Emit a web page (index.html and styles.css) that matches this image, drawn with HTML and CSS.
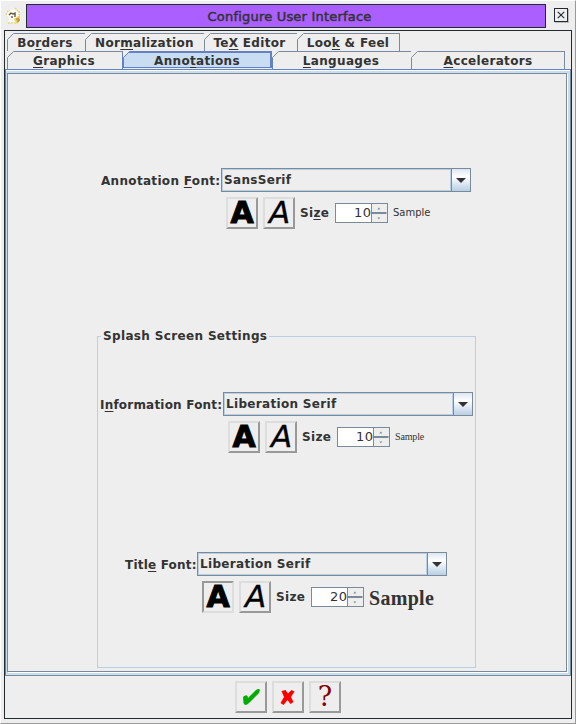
FILE: index.html
```
<!DOCTYPE html>
<html lang="en">
<head>
<meta charset="utf-8">
<title>Configure User Interface</title>
<link rel="stylesheet" href="styles.css">
</head>
<body>
<svg class="defs" width="0" height="0">
  <symbol id="cut" viewBox="0 0 7 7"><path d="M0 0H7L0 7Z" fill="#eee"/><path d="M.5 6.5L6.5 .5" stroke="currentColor" fill="none"/></symbol>
  <symbol id="down" viewBox="0 0 10 5"><path d="M0 0H10L5 5Z" fill="#333"/></symbol>
  <symbol id="arrows" viewBox="0 0 15 18"><path d="M0 9H15" stroke="#7a8a99" stroke-width="2"/><path d="M5.5 5.5H8.5L7 3.5ZM5.5 13.5H8.5L7 15.5Z" fill="#7a8a99"/></symbol>
</svg>
<div class="window">
  <header class="titlebar">
    <svg class="appicon" width="18" height="18" viewBox="0 0 18 18"><path d="M1 8Q2 2 7 3Q10 0 12 4Q15 5 15 9L16 14L11 17L3 16Q3 13 5 11Z" fill="#fffdf0"/><path d="M1 8L3 4L5 3M10 1L13 4M3 16H12M14 4V8" stroke="#ead27b" stroke-width="1.5" fill="none" stroke-dasharray="2 1"/><path d="M4 8L6 6L8 7L10 6V10M7 9V11" stroke="#594f3c" stroke-width="1.3" fill="none"/><path d="M9 12L15 8V14L12 17Z" fill="#efcd59"/><path d="M11 12H14V14H12" stroke="#9d853c" fill="none"/></svg>
    <h1 class="title">Configure User Interface</h1>
    <button class="close"><svg width="13" height="13" viewBox="0 0 13 13"><path d="M3 3L10 10M10 3L3 10" stroke="#222b2e" stroke-width="1.2"/></svg></button>
  </header>
  <main class="frame">
    <nav class="tabs upper">
      <div class="tab borders"><svg class="cut"><use href="#cut"/></svg><span>Bo<u>r</u>ders</span></div>
      <div class="tab normal"><svg class="cut"><use href="#cut"/></svg><span>Nor<u>m</u>alization</span></div>
      <div class="tab tex"><svg class="cut"><use href="#cut"/></svg><span>Te<u>X</u> Editor</span></div>
      <div class="tab look"><svg class="cut"><use href="#cut"/></svg><span>Loo<u>k</u> &amp; Feel</span></div>
    </nav>
    <nav class="tabs lower">
      <div class="tab graphics"><svg class="cut"><use href="#cut"/></svg><span><u>G</u>raphics</span></div>
      <div class="tab annot selected"><svg class="cut"><use href="#cut"/></svg><span>Anno<u>t</u>ations</span></div>
      <div class="tab lang"><svg class="cut"><use href="#cut"/></svg><span><u>L</u>anguages</span></div>
      <div class="tab accel"><svg class="cut"><use href="#cut"/></svg><span><u>A</u>ccelerators</span></div>
    </nav>
    <div class="pane"><div class="sheet">
      <section class="group annotation">
        <div class="row"><label>Annotation <u>F</u>ont:</label><div class="combo"><span>SansSerif</span><i><svg width="10" height="5"><use href="#down"/></svg></i></div></div>
        <div class="row tools"><button class="toggle"><b>A</b></button><button class="toggle"><em>A</em></button><label class="size">Si<u>z</u>e</label><div class="spinner"><span>10</span><svg class="arrows"><use href="#arrows"/></svg></div><span class="sample sans">Sample</span></div>
      </section>
      <fieldset class="splash">
        <legend>Splash Screen Settings</legend>
        <section class="group info">
          <div class="row"><label>I<u>n</u>formation Font:</label><div class="combo"><span>Liberation Serif</span><i><svg width="10" height="5"><use href="#down"/></svg></i></div></div>
          <div class="row tools"><button class="toggle"><b>A</b></button><button class="toggle"><em>A</em></button><label class="size">Size</label><div class="spinner"><span>10</span><svg class="arrows"><use href="#arrows"/></svg></div><span class="sample serif">Sample</span></div>
        </section>
        <section class="group titlefont">
          <div class="row"><label>Titl<u>e</u> Font:</label><div class="combo"><span>Liberation Serif</span><i><svg width="10" height="5"><use href="#down"/></svg></i></div></div>
          <div class="row tools"><button class="toggle pressed"><b>A</b></button><button class="toggle"><em>A</em></button><label class="size">Size</label><div class="spinner"><span>20</span><svg class="arrows"><use href="#arrows"/></svg></div><span class="sample large">Sample</span></div>
        </section>
      </fieldset>
    </div></div>
    <footer class="actions">
      <button class="toggle"><svg width="28" height="28" viewBox="0 0 28 28"><path d="M6 14Q9 11 10.500 13L11 15L19 7Q22 5 23 7L22 10L12 20Q8 24 6.500 20Z" fill="#00ad00"/></svg></button>
      <button class="toggle"><svg width="28" height="28" viewBox="0 0 28 28"><path transform="translate(-.5 0)" d="M8 8L12 7L14.500 10.500L18 7L21 8.500L17.500 14L20 19L17 21L14 17L10 22L7 20L10.500 14Z" fill="#f00"/></svg></button>
      <button class="toggle help">?</button>
    </footer>
  </main>
</div>
</body>
</html>
```
FILE: styles.css
```
* { box-sizing: border-box; }
body { margin: 0; background: #eee; color: #333; font: bold 12px/14px "DejaVu Sans", sans-serif; letter-spacing: .32px; }
button { padding: 0; font: inherit; color: inherit; background: #eee; }
u { text-decoration: underline; text-decoration-thickness: 1px; text-underline-offset: 2px; text-decoration-skip-ink: none; }
.defs { position: absolute; }
.window { width: 576px; height: 724px; padding: 3px 3px 4px 3px; border: 1px solid; border-color: #fff #999 #999 #fff; }
.titlebar { display: flex; height: 26px; align-items: flex-start; }
.appicon { margin: 3px 2px 0 1px; }
.title { flex: none; width: 520px; height: 24px; margin: 0 0 0 1px; border: 1px solid #222b2e; background: #ac5fff; font-size: 13px; font-weight: normal; line-height: 23px; text-align: center; letter-spacing: .2px; padding-left: 7px; -webkit-text-stroke: .5px #333; }
.close { flex: none; width: 14px; height: 14px; margin: 4px 0 0 8px; border: 1px solid #222b2e; box-shadow: 1px 1px #bbb; }
.close svg { display: block; width: 12px; height: 12px; }
.frame { width: 568px; height: 689px; border: 1px solid #222b2e; }
.tabs { display: flex; height: 18px; margin-left: 2px; }
.upper { margin-top: 2px; }
.tab { position: relative; color: #333; border-top: 1px solid #7a8a99; border-left: 1px solid #7a8a99; text-align: center; line-height: 18px; height: 18px; }
.tab:last-child { border-right: 1px solid #7a8a99; }
.cut { position: absolute; left: -1px; top: -1px; width: 7px; height: 7px; color: #7a8a99; }
.borders { width: 78px; padding-right: 3px; }
.normal { width: 119px; padding-right: 1px; }
.tex { width: 93px; padding-right: 3px; }
.look { width: 103px; padding-right: 1px; }
.graphics { width: 116px; padding-right: 2px; border-right: 1px solid #6382bf; }
.annot { width: 149px; padding-right: 1px; }
.lang { width: 139px; padding-right: 2px; }
.accel { width: 154px; }
.tab.selected { background: #c8ddf2; border: 1px solid #6382bf; height: 17px; box-shadow: inset -1px 1px #6382bf; }
.selected .cut { color: #6382bf; }
.selected + .tab { border-left-color: #6382bf; }
.pane { height: 607px; border: 1px solid #7a8a99; border-top-color: #6382bf; border-left-color: #6382bf; background: #c8ddf2; padding: 3px 3px 3px 1px; box-shadow: inset 0 1px #fff; }
.sheet { width: 560px; height: 599px; border: 1px solid #7a8a99; box-shadow: 1px 1px #fff; background: #eee; padding-top: 94px; }
.row { display: flex; }
.row label { flex: none; white-space: nowrap; padding-top: 6px; }
.combo { flex: none; display: flex; width: 250px; height: 24px; border: 1px solid #7a8a99; }
.combo span { width: 229px; border: 1px solid #b8cfe5; padding: 3px 0 0 1px; }
.combo i { flex: 1; display: flex; align-items: center; justify-content: center; border-left: 1px solid #7a8a99; background: linear-gradient(#dce6f2, #fff 35%, #b8cfe5); }
.tools { padding-top: 5px; }
.toggle { flex: none; width: 32px; height: 32px; margin-right: 5px; border: 2px solid; border-color: #ddd #999 #999 #ddd; color: #000; display: flex; justify-content: center; align-items: center; }
.pressed { border-color: #999 #ddd #ddd #999; }
.toggle b, .toggle em { font-size: 30px; line-height: 28px; letter-spacing: 0; margin-top: -1px; }
.toggle b { -webkit-text-stroke: 1px #000; }
.toggle em { font-weight: normal; font-size: 31px; padding-left: 1px; margin-top: -2px; -webkit-text-stroke: .3px #000; }
.row .size { width: 35px; padding-top: 9px; }
.spinner { display: flex; width: 53px; height: 20px; margin-top: 6px; border: 1px solid #7a8a99; background: #eee; }
.spinner span { width: 37px; background: #fff; border-right: 1px solid #7a8a99; text-align: right; font-weight: normal; line-height: 18px; font-size: 13px; }
.spinner .arrows { width: 15px; height: 18px; }
.sample { margin-left: 5px; white-space: nowrap; letter-spacing: 0; }
.sans { font-weight: normal; font-size: 10px; margin-top: 9px; }
.serif { font: 10px/14px "Liberation Serif", serif; letter-spacing: -.15px; margin-top: 9px; }
.large { font: bold 20px/24px "Liberation Serif", serif; letter-spacing: .3px; margin-top: 5px; }
.annotation { margin-left: 93px; height: 161px; }
.annotation .row label:first-child { width: 120px; }
.annotation .tools { padding-left: 125px; }
.splash { width: 379px; height: 339px; margin: 0 0 0 89px; padding: 0; border: 1px solid #b8cfe5; }
legend { height: 14px; margin: 0 0 0 3px; padding: 0 2px; letter-spacing: .35px; }
.info { margin: 49px 0 0 2px; height: 160px; }
.info .row label:first-child { width: 123px; letter-spacing: .2px; }
.info .tools { padding-left: 128px; }
.titlefont { margin-left: 27px; }
.titlefont .row label:first-child { width: 72px; letter-spacing: .2px; }
.titlefont .tools { padding-left: 77px; }
.actions { display: flex; justify-content: center; padding: 5px 0 0 5px; }
.help { font: 27px/28px "DejaVu Serif", serif; color: #850000; }
```
